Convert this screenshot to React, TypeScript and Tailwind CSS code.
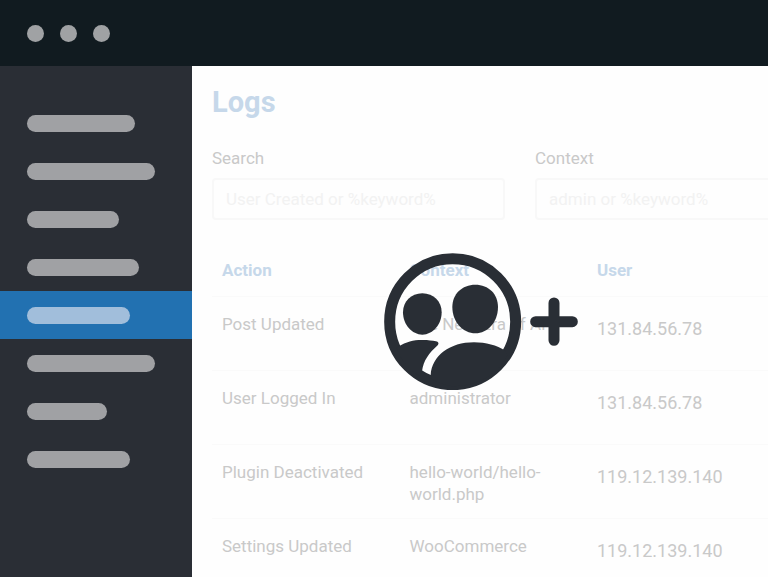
import { clsx } from 'clsx';

interface LogEntry {
  action: string;
  context: string;
  user: string;
}

const MENU_BARS = [
  { width: 'w-[108px]' },
  { width: 'w-32' },
  { width: 'w-[92px]' },
  { width: 'w-28' },
  { width: 'w-[103px]', active: true },
  { width: 'w-32' },
  { width: 'w-20' },
  { width: 'w-[103px]' },
];

const FIELDS = [
  { id: 'search', label: 'Search', placeholder: 'User Created or %keyword%' },
  { id: 'context', label: 'Context', placeholder: 'admin or %keyword%' },
];

const LOGS: LogEntry[] = [
  { action: 'Post Updated', context: 'The Next Era of AI', user: '131.84.56.78' },
  { action: 'User Logged In', context: 'administrator', user: '131.84.56.78' },
  { action: 'Plugin Deactivated', context: 'hello-world/hello-world.php', user: '119.12.139.140' },
  { action: 'Settings Updated', context: 'WooCommerce', user: '119.12.139.140' },
];

function TitleBar() {
  return (
    <header className="flex h-[66px] shrink-0 items-center gap-4 bg-[#111b20] px-[27px]">
      <span className="size-[17px] rounded-full bg-[#a0a2a4]" />
      <span className="size-[17px] rounded-full bg-[#a0a2a4]" />
      <span className="size-[17px] rounded-full bg-[#a0a2a4]" />
    </header>
  );
}

function Sidebar() {
  return (
    <nav className="w-48 shrink-0 bg-[#2a2e35] pt-[33px]">
      <ul>
        {MENU_BARS.map((bar, i) => (
          <li
            key={i}
            className={clsx('flex h-12 items-center px-[27px]', bar.active && 'bg-[#2271b1]')}
          >
            <span
              className={clsx(
                'h-[17px] rounded-full',
                bar.width,
                bar.active ? 'bg-[#a1bedb]' : 'bg-[#a0a1a4]'
              )}
            />
          </li>
        ))}
      </ul>
    </nav>
  );
}

function Filters() {
  return (
    <form className="mt-[26px] flex gap-[30px]">
      {FIELDS.map((field) => (
        <div key={field.id} className="w-[293px] shrink-0">
          <label htmlFor={field.id} className="block leading-6">
            {field.label}
          </label>
          <input
            id={field.id}
            type="text"
            placeholder={field.placeholder}
            className="mt-2 block h-[42px] w-full rounded-sm border-2 border-[#f8f8f8] px-3 placeholder:text-[#f2f2f2] focus:outline-none"
          />
        </div>
      ))}
    </form>
  );
}

function LogsTable() {
  return (
    <table className="mt-6 w-[750px] table-fixed text-left leading-[22px]">
      <thead>
        <tr className="h-[52px] border-b border-[#fafafa] text-[#c6d8ea]">
          <th className="px-2.5 font-bold">Action</th>
          <th className="px-2.5 font-bold">Context</th>
          <th className="px-2.5 font-bold">User</th>
          <th />
        </tr>
      </thead>
      <tbody>
        {LOGS.map((log) => (
          <tr key={log.action} className="h-[74px] border-b border-[#fafafa] align-top">
            <td className="px-2.5 pt-4">{log.action}</td>
            <td className="px-2.5 pt-4">{log.context}</td>
            <td className="px-2.5 pt-[21px] text-[18px]">{log.user}</td>
            <td />
          </tr>
        ))}
      </tbody>
    </table>
  );
}

function AddUsersIcon() {
  return (
    <svg viewBox="36 38 588 412" className="w-[196px] text-[#292e35]" fill="currentColor">
      <circle cx="248" cy="244" r="189" fill="none" stroke="currentColor" strokeWidth="33" />
      <path d="M157 159C191 159 215 184 215 216C215 253 188 283 157 283C126 283 99 253 99 216C99 184 123 159 157 159Z" />
      <path d="M316 133C356 133 384 161 384 200C384 245 353 279 316 279C279 279 247 245 247 200C247 161 276 133 316 133Z" />
      <path d="M85 319C110 303 135 298 160 299C174 299 187 301 198 303C205 304 208 310 203 315C177 338 160 361 156 393L148 406C112 386 89 352 80 322Z" />
      <path d="M182 405C186 345 240 306 312 306C348 306 380 315 406 331L412 345C387 400 325 438 248 438C220 434 198 424 178 412Z" />
      <path d="M552 188V300M497 244H607" stroke="currentColor" strokeWidth="33" strokeLinecap="round" />
    </svg>
  );
}

export default function App() {
  return (
    <div className="flex h-screen flex-col overflow-hidden bg-white font-['Roboto','Liberation_Sans',sans-serif] text-[17px] text-[#c9c9c9]">
      <TitleBar />
      <div className="flex min-h-0 flex-1">
        <Sidebar />
        <main className="relative min-w-0 flex-1 overflow-hidden bg-[#fefefe] px-5 pt-[18px]">
          <h1 className="text-[29px] leading-9 font-bold text-[#c6d8ea]">Logs</h1>
          <Filters />
          <LogsTable />
          <div className="pointer-events-none absolute inset-0 flex items-center justify-center">
            <AddUsersIcon />
          </div>
        </main>
      </div>
    </div>
  );
}
